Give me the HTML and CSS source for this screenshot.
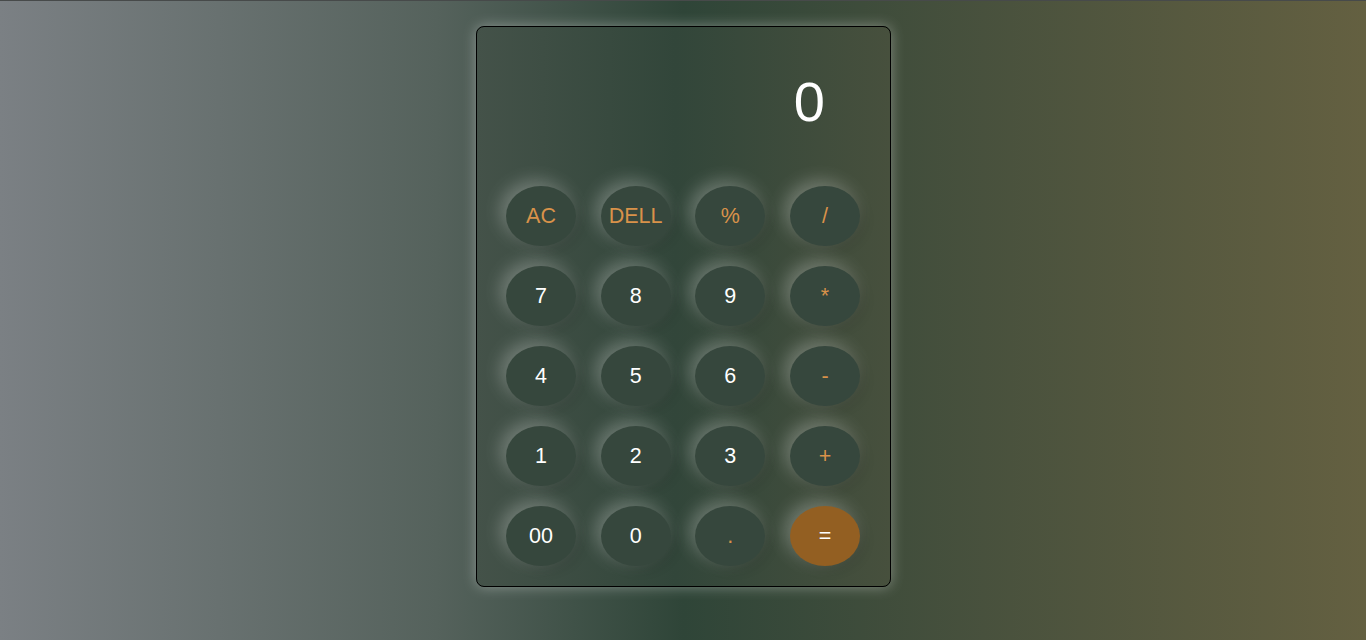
FILE: index.html
```html
<!DOCTYPE html>
<html lang="en">
<head>
<meta charset="utf-8">
<title>Calculator</title>
<link rel="stylesheet" href="styles.css">
</head>
<body>
<div class="calculator">
  <div class="display">0</div>
  <div class="keys">
    <button class="key op">AC</button>
    <button class="key op">DELL</button>
    <button class="key op">%</button>
    <button class="key op">/</button>
    <button class="key">7</button>
    <button class="key">8</button>
    <button class="key">9</button>
    <button class="key op">*</button>
    <button class="key">4</button>
    <button class="key">5</button>
    <button class="key">6</button>
    <button class="key op">-</button>
    <button class="key">1</button>
    <button class="key">2</button>
    <button class="key">3</button>
    <button class="key op">+</button>
    <button class="key">00</button>
    <button class="key">0</button>
    <button class="key op">.</button>
    <button class="key equal">=</button>
  </div>
</div>
</body>
</html>
```
FILE: styles.css
```css
* { box-sizing: border-box; }
html, body { height: 100%; }
body {
  margin: 0;
  border-top: 1px solid #474a4a;
  background: linear-gradient(to right, #7b8084 0%, #55625c 32%, #2f4538 50%, #48513d 72%, #646041 100%);
  font-family: "Liberation Sans", Arial, sans-serif;
  display: flex;
  justify-content: center;
  align-items: flex-start;
  padding-top: 25px;
  overflow: hidden;
}
.calculator {
  width: 415px;
  height: 561px;
  margin-left: 1px;
  border: 1px solid #000;
  border-radius: 8px;
  background: linear-gradient(to right, #445249 0%, #32463a 48%, #47503d 100%);
  box-shadow: 0 0 14px rgba(255, 255, 255, 0.35);
  padding: 0 29px 19px 29px;
  display: flex;
  flex-direction: column;
}
.display {
  height: 159px;
  color: #fff;
  font-size: 56px;
  text-align: right;
  padding-right: 36px;
  padding-top: 47px;
  line-height: 1;
}
.keys {
  display: grid;
  grid-template-columns: repeat(4, 70px);
  grid-auto-rows: 60px;
  column-gap: 24.67px;
  row-gap: 20px;
}
.key {
  width: 70px;
  height: 60px;
  border: none;
  border-radius: 50%;
  background: #36473d;
  color: #fff;
  font-family: "Liberation Sans", Arial, sans-serif;
  font-size: 21.5px;
  padding: 0;
  box-shadow: -5px -5px 18px rgba(255, 255, 255, 0.28), 4px 4px 12px rgba(0, 0, 0, 0.14);
  cursor: pointer;
}
.key.op { color: #d9924a; }
.key.equal {
  background: #935f22;
  color: #fff;
}
```
